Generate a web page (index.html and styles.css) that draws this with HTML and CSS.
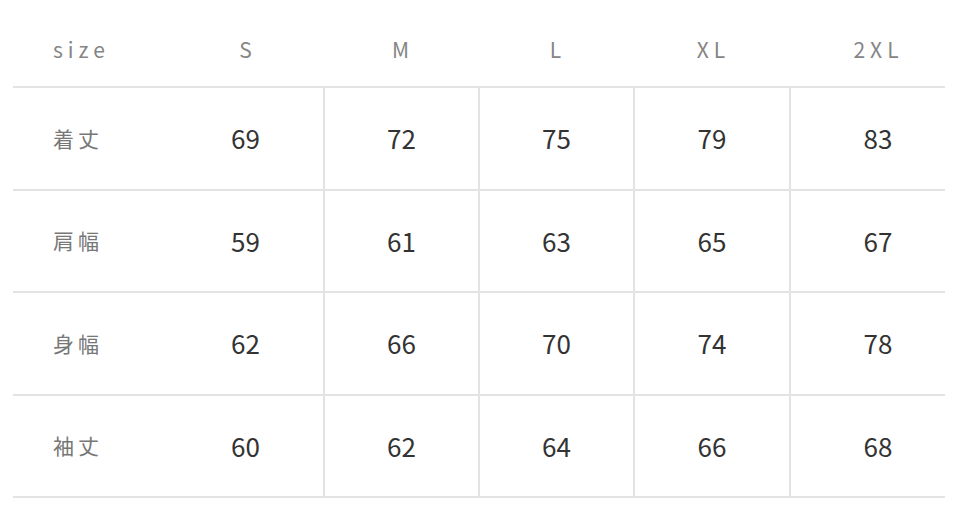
FILE: index.html
```html
<!DOCTYPE html>
<html lang="ja">
<head>
<meta charset="utf-8">
<title>size</title>
<link rel="stylesheet" href="styles.css">
</head>
<body>
<div class="wrap">
  <table class="size-table">
    <colgroup>
      <col class="c-label"><col class="c-s"><col class="c-n"><col class="c-n"><col class="c-n2"><col class="c-n2">
    </colgroup>
    <thead>
      <tr>
        <th class="label">size</th>
        <th>S</th>
        <th>M</th>
        <th>L</th>
        <th>XL</th>
        <th class="last">2XL</th>
      </tr>
    </thead>
    <tbody>
      <tr>
        <td class="label">着丈</td>
        <td>69</td><td>72</td><td>75</td><td>79</td><td class="last">83</td>
      </tr>
      <tr>
        <td class="label">肩幅</td>
        <td>59</td><td>61</td><td>63</td><td>65</td><td class="last">67</td>
      </tr>
      <tr>
        <td class="label">身幅</td>
        <td>62</td><td>66</td><td>70</td><td>74</td><td class="last">78</td>
      </tr>
      <tr>
        <td class="label">袖丈</td>
        <td>60</td><td>62</td><td>64</td><td>66</td><td class="last">68</td>
      </tr>
    </tbody>
  </table>
</div>
</body>
</html>
```

FILE: styles.css
```css
* { box-sizing: border-box; }

html, body {
  margin: 0;
  padding: 0;
  background: #ffffff;
}

body {
  font-family: "Noto Sans CJK JP", "Noto Sans", sans-serif;
}

.wrap {
  padding: 10px 15px 0 13px;
}

.size-table {
  width: 932px;
  table-layout: fixed;
  border-collapse: separate;
  border-spacing: 0;
}

.c-label { width: 155px; }
.c-s { width: 155px; }
.c-n { width: 155px; }
.c-n2 { width: 156px; }

.size-table th,
.size-table td {
  padding: 0;
  text-align: center;
  vertical-align: middle;
}

.size-table th {
  height: 78px;
  padding-top: 3px;
  font-size: 21px;
  font-weight: 400;
  color: #858585;
  letter-spacing: 5px;
  padding-left: 5px;
  line-height: 1;
  border-bottom: 2px solid #e3e3e3;
}

.size-table td {
  height: 102.5px;
  font-size: 26px;
  font-weight: 400;
  color: #333333;
  line-height: 1;
  border-bottom: 2px solid #e3e3e3;
}

.size-table td:nth-child(n+3) {
  border-left: 2px solid #e3e3e3;
}

.size-table .label {
  text-align: left;
  padding-left: 40px;
  font-size: 21px;
  color: #777777;
  letter-spacing: 4px;
}

.size-table th.label {
  color: #858585;
  letter-spacing: 5px;
}

.size-table .last {
  padding-left: 20px;
}

.size-table th.last {
  padding-left: 23px;
}
```
